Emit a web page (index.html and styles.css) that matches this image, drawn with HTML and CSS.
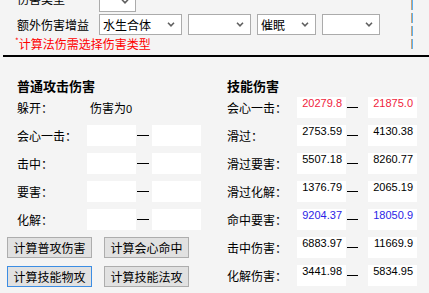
FILE: index.html
```html
<!DOCTYPE html>
<html lang="zh-CN">
<head>
    <meta charset="UTF-8">
    <meta name="viewport" content="width=device-width, initial-scale=1.0">
    <title>伤害计算</title>
    <link rel="stylesheet" href="styles.css">
</head>
<body>
    <div class="top">
        <!-- splitter marker on the right -->
        <div class="dash-line"></div>

        <div class="field-row row-cut">
            <span class="field-label">伤害类型</span>
            <div class="combo combo-type">
                <span class="combo-text"></span>
                <svg class="chev" width="8" height="5" viewBox="0 0 8 5"><path d="M1 0.8 L4 3.8 L7 0.8" stroke="#606060" stroke-width="1.6" fill="none"/></svg>
            </div>
        </div>

        <div class="field-row row-buff">
            <span class="field-label">额外伤害增益</span>
            <div class="combo combo-a">
                <span class="combo-text">水生合体</span>
                <svg class="chev" width="8" height="5" viewBox="0 0 8 5"><path d="M1 0.8 L4 3.8 L7 0.8" stroke="#606060" stroke-width="1.6" fill="none"/></svg>
            </div>
            <div class="combo combo-b">
                <span class="combo-text"></span>
                <svg class="chev" width="8" height="5" viewBox="0 0 8 5"><path d="M1 0.8 L4 3.8 L7 0.8" stroke="#606060" stroke-width="1.6" fill="none"/></svg>
            </div>
            <div class="combo combo-c">
                <span class="combo-text">催眠</span>
                <svg class="chev" width="8" height="5" viewBox="0 0 8 5"><path d="M1 0.8 L4 3.8 L7 0.8" stroke="#606060" stroke-width="1.6" fill="none"/></svg>
            </div>
            <div class="combo combo-d">
                <span class="combo-text"></span>
                <svg class="chev" width="8" height="5" viewBox="0 0 8 5"><path d="M1 0.8 L4 3.8 L7 0.8" stroke="#606060" stroke-width="1.6" fill="none"/></svg>
            </div>
        </div>

        <p class="note"><span class="star">*</span>计算法伤需选择伤害类型</p>
    </div>

    <div class="rule"></div>

    <div class="panels">
        <!-- normal attack -->
        <section class="panel panel-normal">
            <h2>普通攻击伤害</h2>
            <div class="grid grid-normal">
                <span class="lbl">躲开：</span>
                <span class="result">伤害为<span class="num">0</span></span>

                <span class="lbl">会心一击：</span>
                <span class="box"></span><span class="dash"></span><span class="box"></span>

                <span class="lbl">击中：</span>
                <span class="box"></span><span class="dash"></span><span class="box"></span>

                <span class="lbl">要害：</span>
                <span class="box"></span><span class="dash"></span><span class="box"></span>

                <span class="lbl">化解：</span>
                <span class="box"></span><span class="dash"></span><span class="box"></span>
            </div>
            <div class="buttons">
                <button class="btn">计算普攻伤害</button>
                <button class="btn">计算会心命中</button>
                <button class="btn btn-focus">计算技能物攻</button>
                <button class="btn">计算技能法攻</button>
            </div>
        </section>

        <!-- skill damage -->
        <section class="panel panel-skill">
            <h2>技能伤害</h2>
            <div class="grid grid-skill">
                <span class="lbl">会心一击：</span>
                <span class="box num red">20279.8</span><span class="under"></span><span class="box num red">21875.0</span>

                <span class="lbl">滑过：</span>
                <span class="box num">2753.59</span><span class="under"></span><span class="box num">4130.38</span>

                <span class="lbl">滑过要害：</span>
                <span class="box num">5507.18</span><span class="under"></span><span class="box num">8260.77</span>

                <span class="lbl">滑过化解：</span>
                <span class="box num">1376.79</span><span class="under"></span><span class="box num">2065.19</span>

                <span class="lbl">命中要害：</span>
                <span class="box num blue">9204.37</span><span class="under"></span><span class="box num blue">18050.9</span>

                <span class="lbl">击中伤害：</span>
                <span class="box num">6883.97</span><span class="under"></span><span class="box num">11669.9</span>

                <span class="lbl">化解伤害：</span>
                <span class="box num">3441.98</span><span class="under"></span><span class="box num">5834.95</span>
            </div>
        </section>
    </div>
</body>
</html>
```

FILE: styles.css
```css
html, body {
    margin: 0;
    padding: 0;
}
body {
    width: 429px;
    height: 293px;
    overflow: hidden;
    background-color: #f4f4f4;
    color: #000;
    font-family: "Noto Sans CJK SC", "Noto Sans", sans-serif;
    font-size: 12px;
    line-height: 16px;
}

/* top options area */
.top {
    display: flow-root;
    position: relative;
    height: 55px;
    padding-left: 17px;
}
.dash-line {
    position: absolute;
    left: 411px;
    top: 0;
    width: 2px;
    height: 49px;
    background:
        repeating-linear-gradient(#c9a27a 0 10px, transparent 10px 13px) left top / 1px 100% no-repeat,
        repeating-linear-gradient(#5cb0f0 0 10px, transparent 10px 13px) right top / 1px 100% no-repeat;
}
.field-row {
    display: flex;
    align-items: center;
    height: 21px;
}
.row-cut {
    margin-top: -9px;
}
.row-cut .field-label {
    margin-bottom: 6px;
}
.row-buff {
    margin-top: 2px;
}
.field-label {
    width: 82px;
}
.combo {
    box-sizing: border-box;
    height: 21px;
    display: flex;
    align-items: center;
    justify-content: space-between;
    background: #fff;
    border: 1px solid #ababab;
    padding: 0 6px 0 3px;
}
.combo-text {
    line-height: 19px;
}
.chev {
    display: block;
}
.combo-type { width: 37px; }
.combo-a { width: 83px; margin-right: 6px; }
.combo-b { width: 63px; margin-right: 6px; }
.combo-c { width: 59px; margin-right: 6px; }
.combo-d { width: 58px; }

.note {
    margin: 1px 0 0 -2px;
    color: #ff0000;
    line-height: 16px;
}
.star {
    font-size: 8px;
    vertical-align: top;
    line-height: 10px;
}

.rule {
    height: 2px;
    margin-left: 3px;
    background: #000;
}

/* result panels */
.panels {
    display: flex;
}
.panel h2 {
    margin: 21px 0 3px;
    font-size: 13px;
    line-height: 16px;
    font-weight: bold;
}
.panel-normal {
    width: 210px;
    padding-left: 17px;
}
.grid {
    display: grid;
    grid-auto-rows: 21px;
    row-gap: 7px;
    align-items: center;
}
.grid-normal {
    grid-template-columns: 70px 49px 16px 49px;
}
.grid-skill {
    grid-template-columns: 70px 49px 22px 49px;
}
.result {
    grid-column: 2 / span 3;
    padding-left: 3px;
}
.box {
    height: 21px;
    background: #fff;
}
.num {
    font-family: "Liberation Sans", Arial, sans-serif;
    font-size: 11px;
    line-height: 13px;
}
.box.num {
    box-sizing: border-box;
    text-align: right;
    padding-right: 4px;
}
.red { color: #f01c3c; }
.blue { color: #2c1ee6; }
.dash {
    height: 1px;
    width: 12px;
    margin-left: 1px;
    background: #000;
}
.under {
    align-self: start;
    margin-top: 10px;
    height: 1px;
    width: 11px;
    margin-left: 1px;
    background: #000;
}

.buttons {
    display: grid;
    grid-template-columns: 85px 85px;
    column-gap: 12px;
    row-gap: 8px;
    margin: 7px 0 0 -10px;
}
.btn {
    box-sizing: border-box;
    height: 21px;
    padding: 0;
    font-family: "Noto Sans CJK SC", sans-serif;
    font-size: 12px;
    line-height: 19px;
    color: #000;
    background: #e1e1e1;
    border: 1px solid #adadad;
}
.btn-focus {
    border-color: #3c8de3;
}
```
